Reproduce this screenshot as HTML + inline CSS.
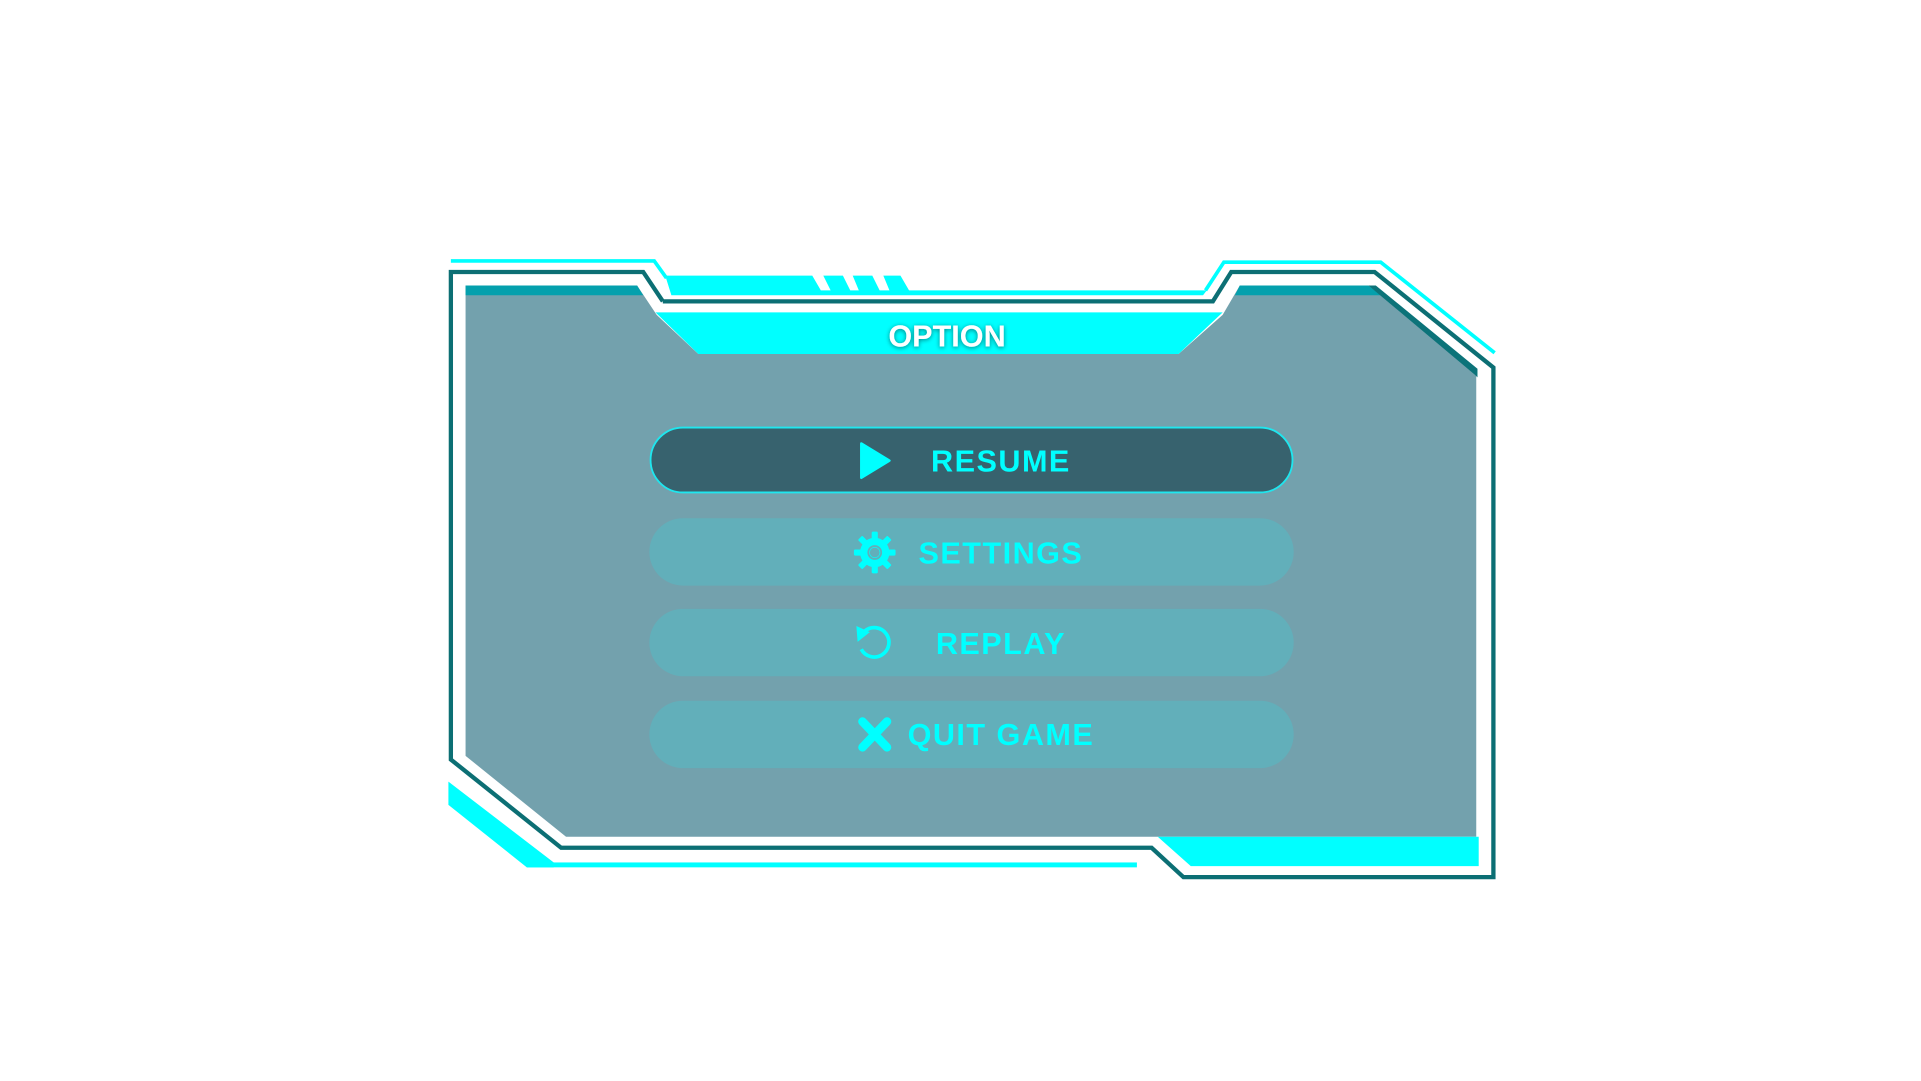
<!DOCTYPE html>
<html><head><meta charset="utf-8"><style>
html,body{margin:0;padding:0;background:#fff;width:1921px;height:1081px;overflow:hidden}
svg{display:block}
text{font-family:"Liberation Sans",sans-serif;font-weight:bold}
</style></head><body>
<svg width="1921" height="1081" viewBox="0 0 1568 882.4" xmlns="http://www.w3.org/2000/svg">
<defs><filter id="sh" x="-20%" y="-40%" width="140%" height="180%"><feGaussianBlur in="SourceAlpha" stdDeviation="2"/><feOffset dx="0" dy="1"/><feComponentTransfer><feFuncA type="linear" slope="0.5"/></feComponentTransfer><feMerge><feMergeNode/><feMergeNode in="SourceGraphic"/></feMerge></filter></defs>
<polygon points="380,233 520,233 536,257 570,289 962,289 998,257 1012,233 1117,233 1205,305 1205,683 462,683 380,617" fill="#73a1ad"/>
<polygon points="380,233 520,233 525,241 380,241" fill="#04a0ad"/>
<polygon points="1012,233 1117,233 1127,241 1008,241" fill="#04a0ad"/>
<polygon points="1117,233 1123,233 1206,301 1206,308 1204,306" fill="#0c7379"/>
<polygon points="535,255 998,255 962,289 570,289" fill="#00ffff"/>
<polyline points="541,246 525,222 368,222 368,620 458,692 940,692 966,716 1219,716 1219,300 1122,222 1005,222 990,246 541,246" fill="none" stroke="#0c6f74" stroke-width="3.5"/>
<polygon points="543,225 663,225 670,237 678,237 672,225 688,225 694,237 701,237 696,225 712,225 718,237 726,237 721,225 735,225 742,237 985,237 982,241 548,241" fill="#00ffff"/>
<polyline points="368,213 534,213 544,227" fill="none" stroke="#00ffff" stroke-width="3"/>
<polyline points="984,237 999,214 1127,214 1220,288" fill="none" stroke="#00ffff" stroke-width="3"/>
<polygon points="366,638 452,704 452,708 430,708 366,657" fill="#00ffff"/>
<rect x="430" y="704" width="498" height="4" fill="#00ffff"/>
<polygon points="945,683 1207,683 1207,707 972,707" fill="#00ffff"/>
<text x="773" y="283" font-size="25" fill="#fff" text-anchor="middle" filter="url(#sh)">OPTION</text>
<rect x="531" y="349" width="524" height="53" rx="26.5" fill="#37626e" stroke="#1fe6ee" stroke-width="1.5"/>
<rect x="530" y="423" width="526" height="55" rx="27.5" fill="#62afba"/>
<rect x="530" y="497" width="526" height="55" rx="27.5" fill="#62afba"/>
<rect x="530" y="572" width="526" height="55" rx="27.5" fill="#62afba"/>
<g fill="#00ffff" font-size="25" letter-spacing="1.2">
<text x="817" y="385" text-anchor="middle">RESUME</text>
<text x="817" y="460" text-anchor="middle">SETTINGS</text>
<text x="817" y="534" text-anchor="middle">REPLAY</text>
<text x="817" y="608" text-anchor="middle">QUIT GAME</text>
</g>
<polygon points="703,362 726,376 703,390" fill="#00ffff" stroke="#00ffff" stroke-width="2" stroke-linejoin="round"/>
<g transform="translate(714,451)" fill="#00ffff">
<circle r="12"/>
<g><rect x="-2.5" y="-17" width="5" height="34" rx="1"/><rect x="-2.5" y="-17" width="5" height="34" rx="1" transform="rotate(45)"/><rect x="-2.5" y="-17" width="5" height="34" rx="1" transform="rotate(90)"/><rect x="-2.5" y="-17" width="5" height="34" rx="1" transform="rotate(135)"/></g>
<circle r="6" fill="#62afba"/><circle r="4.5" fill="#00ffff"/><circle r="4" fill="#62afba"/>
</g>
<path d="M703,530 A12,12 0 1 0 706,515" fill="none" stroke="#00ffff" stroke-width="3"/>
<polygon points="699,511 710,516 700,524" fill="#00ffff"/>
<g stroke="#00ffff" stroke-width="7" stroke-linecap="round"><line x1="704" y1="589" x2="724" y2="610"/><line x1="724" y1="589" x2="704" y2="610"/></g>
</svg>
</body></html>
